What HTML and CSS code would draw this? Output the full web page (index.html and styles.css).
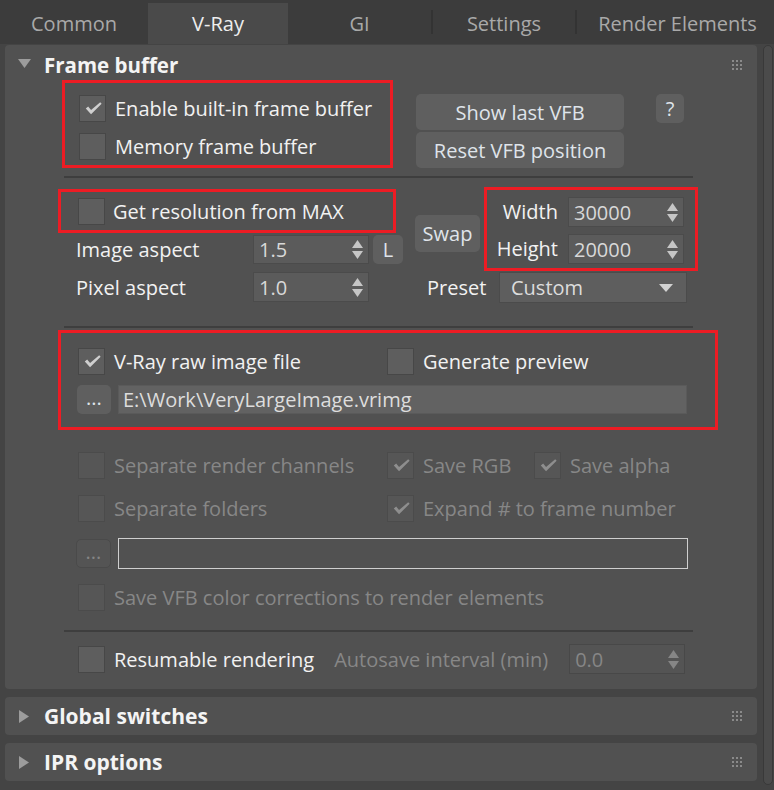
FILE: index.html
```html
<!DOCTYPE html>
<html>
<head>
<meta charset="utf-8">
<link rel="stylesheet" href="styles.css">
</head>
<body>
<div class="tabs">
  <div class="tab t1">Common</div>
  <div class="tab t2 active">V-Ray</div>
  <div class="tab t3">GI</div>
  <span class="tab-sep"></span>
  <div class="tab t4">Settings</div>
  <span class="tab-sep"></span>
  <div class="tab t5">Render Elements</div>
</div>
<div class="main">
  <div class="rollouts">
    <section class="rollout open">
      <div class="ro-head">
        <svg class="tri-down" width="13" height="9" viewBox="0 0 13 9"><path d="M0 0H13L6.5 9Z"/></svg>
        <span class="ro-title">Frame buffer</span>
        <svg class="grip" width="10" height="10" viewBox="0 0 10 10"><rect x="0" y="0" width="2" height="2"/><rect x="4" y="0" width="2" height="2"/><rect x="8" y="0" width="2" height="2"/><rect x="0" y="4" width="2" height="2"/><rect x="4" y="4" width="2" height="2"/><rect x="8" y="4" width="2" height="2"/><rect x="0" y="8" width="2" height="2"/><rect x="4" y="8" width="2" height="2"/><rect x="8" y="8" width="2" height="2"/></svg>
      </div>

      <div class="sec-a">
        <div class="redbox box1">
          <label class="check-row"><span class="cb"><svg class="ck" width="26" height="26" viewBox="0 0 26 26"><path d="M6 12.5L8.5 10.5L11.5 14L21 6L22.5 7.5L11.5 18.5Z"/></svg></span><span>Enable built-in frame buffer</span></label>
          <label class="check-row"><span class="cb"></span><span>Memory frame buffer</span></label>
        </div>
        <div class="btn-col">
          <div class="btn btn-wide">Show last VFB</div>
          <div class="btn btn-wide">Reset VFB position</div>
        </div>
        <div class="btn btn-help">?</div>
      </div>

      <div class="sep sep1"></div>

      <div class="sec-b">
        <div class="res-col">
          <div class="redbox box2">
            <span class="cb"></span><span>Get resolution from MAX</span>
          </div>
          <div class="field-row aspect">
            <span class="lbl">Image aspect</span>
            <div class="spin"><span class="val">1.5</span><svg class="arrows" width="11" height="19" viewBox="0 0 11 19"><path d="M0 8L5.5 0L11 8Z"/><path d="M0 11H11L5.5 19Z"/></svg></div>
            <div class="btn btn-l">L</div>
          </div>
          <div class="field-row pixel">
            <span class="lbl">Pixel aspect</span>
            <div class="spin"><span class="val">1.0</span><svg class="arrows" width="11" height="19" viewBox="0 0 11 19"><path d="M0 8L5.5 0L11 8Z"/><path d="M0 11H11L5.5 19Z"/></svg></div>
          </div>
        </div>
        <div class="btn swap">Swap</div>
        <div class="redbox box3">
          <span class="lbl">Width</span>
          <div class="spin"><span class="val">30000</span><svg class="arrows" width="11" height="19" viewBox="0 0 11 19"><path d="M0 8L5.5 0L11 8Z"/><path d="M0 11H11L5.5 19Z"/></svg></div>
          <span class="lbl">Height</span>
          <div class="spin"><span class="val">20000</span><svg class="arrows" width="11" height="19" viewBox="0 0 11 19"><path d="M0 8L5.5 0L11 8Z"/><path d="M0 11H11L5.5 19Z"/></svg></div>
        </div>
        <div class="preset">
          <span class="lbl">Preset</span>
          <div class="dropdown"><span>Custom</span><svg width="14" height="8" viewBox="0 0 14 8"><path d="M0 0H14L7 8Z"/></svg></div>
        </div>
      </div>

      <div class="sep sep2"></div>

      <div class="redbox box4">
        <div class="grid2">
          <label class="check-row"><span class="cb"><svg class="ck" width="26" height="26" viewBox="0 0 26 26"><path d="M6 12.5L8.5 10.5L11.5 14L21 6L22.5 7.5L11.5 18.5Z"/></svg></span><span>V-Ray raw image file</span></label>
          <label class="check-row"><span class="cb"></span><span>Generate preview</span></label>
        </div>
        <div class="file-row">
          <div class="btn btn-dots">...</div>
          <div class="path">E:\Work\VeryLargeImage.vrimg</div>
        </div>
      </div>

      <div class="sec-d">
        <div class="drow">
          <label class="check-row dis"><span class="cb"></span><span>Separate render channels</span></label>
          <label class="check-row dis"><span class="cb"><svg class="ck" width="26" height="26" viewBox="0 0 26 26"><path d="M6 12.5L8.5 10.5L11.5 14L21 6L22.5 7.5L11.5 18.5Z"/></svg></span><span>Save RGB</span></label>
          <label class="check-row dis"><span class="cb"><svg class="ck" width="26" height="26" viewBox="0 0 26 26"><path d="M6 12.5L8.5 10.5L11.5 14L21 6L22.5 7.5L11.5 18.5Z"/></svg></span><span>Save alpha</span></label>
        </div>
        <div class="drow r2">
          <label class="check-row dis"><span class="cb"></span><span>Separate folders</span></label>
          <label class="check-row dis wide"><span class="cb"><svg class="ck" width="26" height="26" viewBox="0 0 26 26"><path d="M6 12.5L8.5 10.5L11.5 14L21 6L22.5 7.5L11.5 18.5Z"/></svg></span><span>Expand # to frame number</span></label>
        </div>
        <div class="file-row dis-file">
          <div class="btn btn-dots dis-btn">...</div>
          <div class="path empty"></div>
        </div>
        <div class="drow r4">
          <label class="check-row dis"><span class="cb"></span><span>Save VFB color corrections to render elements</span></label>
        </div>
      </div>

      <div class="sep sep3"></div>

      <div class="resume-row">
        <label class="check-row"><span class="cb"></span><span>Resumable rendering</span></label>
        <span class="autosave">Autosave interval (min)</span>
        <div class="spin spin-dis"><span class="val">0.0</span><svg class="arrows" width="11" height="19" viewBox="0 0 11 19"><path d="M0 8L5.5 0L11 8Z"/><path d="M0 11H11L5.5 19Z"/></svg></div>
      </div>
    </section>

    <section class="rollout closed">
      <svg class="tri-right" width="10" height="13" viewBox="0 0 10 13"><path d="M0 0L10 6.5L0 13Z"/></svg>
      <span class="ro-title">Global switches</span>
      <svg class="grip" width="10" height="10" viewBox="0 0 10 10"><rect x="0" y="0" width="2" height="2"/><rect x="4" y="0" width="2" height="2"/><rect x="8" y="0" width="2" height="2"/><rect x="0" y="4" width="2" height="2"/><rect x="4" y="4" width="2" height="2"/><rect x="8" y="4" width="2" height="2"/><rect x="0" y="8" width="2" height="2"/><rect x="4" y="8" width="2" height="2"/><rect x="8" y="8" width="2" height="2"/></svg>
    </section>
    <section class="rollout closed">
      <svg class="tri-right" width="10" height="13" viewBox="0 0 10 13"><path d="M0 0L10 6.5L0 13Z"/></svg>
      <span class="ro-title">IPR options</span>
      <svg class="grip" width="10" height="10" viewBox="0 0 10 10"><rect x="0" y="0" width="2" height="2"/><rect x="4" y="0" width="2" height="2"/><rect x="8" y="0" width="2" height="2"/><rect x="0" y="4" width="2" height="2"/><rect x="4" y="4" width="2" height="2"/><rect x="8" y="4" width="2" height="2"/><rect x="0" y="8" width="2" height="2"/><rect x="4" y="8" width="2" height="2"/><rect x="8" y="8" width="2" height="2"/></svg>
    </section>
  </div>
  <div class="scrollbar"></div>
</div>
</body>
</html>
```
FILE: styles.css
```css
* { box-sizing: border-box; }
body {
  margin: 0;
  width: 774px;
  height: 790px;
  overflow: hidden;
  background: #444444;
  font-family: "Open Sans", "Noto Sans", sans-serif;
  font-size: 20px;
  color: #f2f2f2;
}

/* tabs */
.tabs {
  display: flex;
  height: 44px;
  background: #3c3c3c;
}
.tab {
  display: flex;
  align-items: center;
  justify-content: center;
  color: #a9a9a9;
  padding-top: 2px;
}
.t1 { width: 148px; }
.t2 { width: 140px; }
.t3 { width: 143px; }
.t4 { width: 142px; }
.t5 { width: 197px; padding-left: 4px; }
.tab.active {
  background: #4a4a4a;
  color: #eeeeee;
  margin-top: 3px;
  padding-top: 0;
}
.tab-sep {
  width: 2px;
  height: 24px;
  align-self: center;
  background: #333333;
}

/* layout */
.main {
  display: flex;
  margin-top: 1px;
}
.rollouts {
  margin-left: 5px;
  width: 752px;
  display: flex;
  flex-direction: column;
  gap: 8px;
}
.rollout {
  background: #515151;
  border-radius: 4px;
}
.rollout.open { height: 644px; }
.rollout.closed {
  height: 38px;
  display: flex;
  align-items: center;
  padding: 0 15px 0 14px;
}
.scrollbar {
  margin-left: 6px;
  width: 10px;
  height: 740px;
  background: #4b4b4b;
  border: 1px solid #393939;
  border-radius: 6px;
}

.ro-head {
  height: 35px;
  display: flex;
  align-items: center;
  padding: 4px 15px 0 13px;
}
.tri-down { fill: #9c9c9c; margin-top: -2px; }
.tri-right { fill: #9c9c9c; }
.ro-title {
  font-weight: 700;
  font-size: 20.5px;
  margin-left: 13px;
  color: #f4f4f4;
}
.closed .ro-title { margin-left: 15px; font-size: 21px; }
.grip { fill: #8a8a8a; margin-left: auto; }

/* generic controls */
.redbox { border: 3px solid #ed1c24; }
.check-row {
  display: flex;
  align-items: center;
  height: 27px;
  gap: 9px;
  white-space: nowrap;
}
.cb {
  flex: none;
  width: 27px;
  height: 27px;
  background: #5e5e5e;
  border: 1px solid #474747;
  display: flex;
  align-items: center;
  justify-content: center;
}
.ck { fill: #cfcfcf; }
.btn {
  background: #5f5f5f;
  border-radius: 5px;
  color: #dfe4ea;
  display: flex;
  align-items: center;
  justify-content: center;
}
.spin {
  width: 116px;
  height: 100%;
  background: #5b5b5b;
  border: 1px solid #4b4b4b;
  display: flex;
  align-items: center;
  padding: 0 5px 0 5px;
  color: #d8d8d8;
}
.spin .val { flex: 1; }
.arrows { fill: #c6c6c6; }

/* section A */
.sec-a {
  display: flex;
  align-items: flex-start;
  padding-left: 57px;
}
.box1 {
  width: 331px;
  height: 88px;
  padding: 12px 0 0 14px;
  display: flex;
  flex-direction: column;
  gap: 11px;
}
.btn-col {
  margin-left: 23px;
  margin-top: 14px;
  display: flex;
  flex-direction: column;
  gap: 2px;
}
.btn-wide { width: 208px; height: 36px; }
.btn-help { margin-left: 32px; margin-top: 14px; width: 28px; height: 29px; }

.sep {
  height: 2px;
  width: 629px;
  margin-left: 59px;
  background: #3e3e3e;
}
.sep1 { margin-top: 8px; }
.sep2 { margin-top: 22px; }
.sep3 { margin-top: 19px; }

/* section B */
.sec-b {
  display: grid;
  grid-template-columns: 357px 69px 214px;
  grid-template-rows: 84px 33px;
  padding-left: 53px;
  margin-top: 9px;
}
.res-col {
  grid-column: 1;
  grid-row: 1 / 3;
  display: flex;
  flex-direction: column;
}
.box2 {
  margin-top: 2px;
  width: 338px;
  height: 44px;
  padding-left: 17px;
  display: flex;
  align-items: center;
  gap: 8px;
}
.field-row {
  display: flex;
  align-items: center;
  padding-left: 18px;
}
.field-row .lbl { width: 177px; }
.aspect { margin-top: 2px; height: 29px; }
.pixel { margin-top: 8px; height: 30px; }
.btn-l { margin-left: 4px; width: 30px; height: 29px; }
.swap {
  grid-column: 2;
  grid-row: 1;
  align-self: start;
  margin-top: 28px;
  width: 65px;
  height: 37px;
}
.box3 {
  grid-column: 3;
  grid-row: 1;
  width: 214px;
  height: 84px;
  display: grid;
  grid-template-columns: 71px 116px;
  grid-auto-rows: 30px;
  column-gap: 10px;
  row-gap: 7px;
  padding-top: 7px;
  align-content: start;
}
.box3 .lbl { text-align: right; line-height: 30px; }
.preset {
  grid-column: 2 / 4;
  grid-row: 2;
  display: flex;
  align-items: center;
  margin-top: 1px;
  height: 31px;
  padding-left: 12px;
}
.preset .lbl { width: 72px; }
.dropdown {
  width: 188px;
  height: 31px;
  background: #5e5e5e;
  border: 1px solid #4b4b4b;
  display: flex;
  align-items: center;
  justify-content: space-between;
  padding: 0 13px 0 11px;
  color: #dcdcdc;
  fill: #d2d2d2;
}

/* section C */
.box4 {
  margin: 2px 0 0 53px;
  width: 660px;
  height: 100px;
  padding: 15px 0 0 17px;
}
.grid2 {
  display: grid;
  grid-template-columns: 309px auto;
}
.file-row {
  display: flex;
  gap: 7px;
  margin-top: 10px;
  margin-left: -1px;
  height: 29px;
}
.btn-dots { width: 34px; height: 29px; padding-bottom: 4px; }
.path {
  width: 569px;
  background: #626262;
  border: 1px solid #5a5a5a;
  padding-left: 4px;
  color: #dddddd;
  display: flex;
  align-items: center;
}

/* section D */
.sec-d {
  padding-left: 73px;
  margin-top: 22px;
}
.drow {
  display: grid;
  grid-template-columns: 309px 147px auto;
  height: 27px;
  align-items: center;
}
.r2 { margin-top: 16px; }
.r4 { margin-top: 15px; }
.dis { color: #878787; }
.dis .cb { background: #565656; border-color: #4b4b4b; }
.dis .ck { fill: #8e8e8e; }
.dis-file {
  margin-top: 16px;
  margin-left: -2px;
  height: 31px;
  align-items: center;
}
.dis-btn {
  width: 35px;
  background: #545454;
  border: 1px solid #4a4a4a;
  color: #858585;
}
.path.empty {
  width: 570px;
  height: 31px;
  background: #515151;
  border: 1px solid #cfcfcf;
}

/* resume row */
.resume-row {
  display: flex;
  align-items: center;
  height: 30px;
  margin-top: 12px;
  padding-left: 73px;
}
.autosave { color: #878787; margin-left: 20px; white-space: nowrap; }
.spin-dis {
  margin-left: 21px;
  width: 116px;
  background: #545454;
  border-color: #484848;
  color: #868686;
}
.spin-dis .arrows { fill: #868686; }
```
